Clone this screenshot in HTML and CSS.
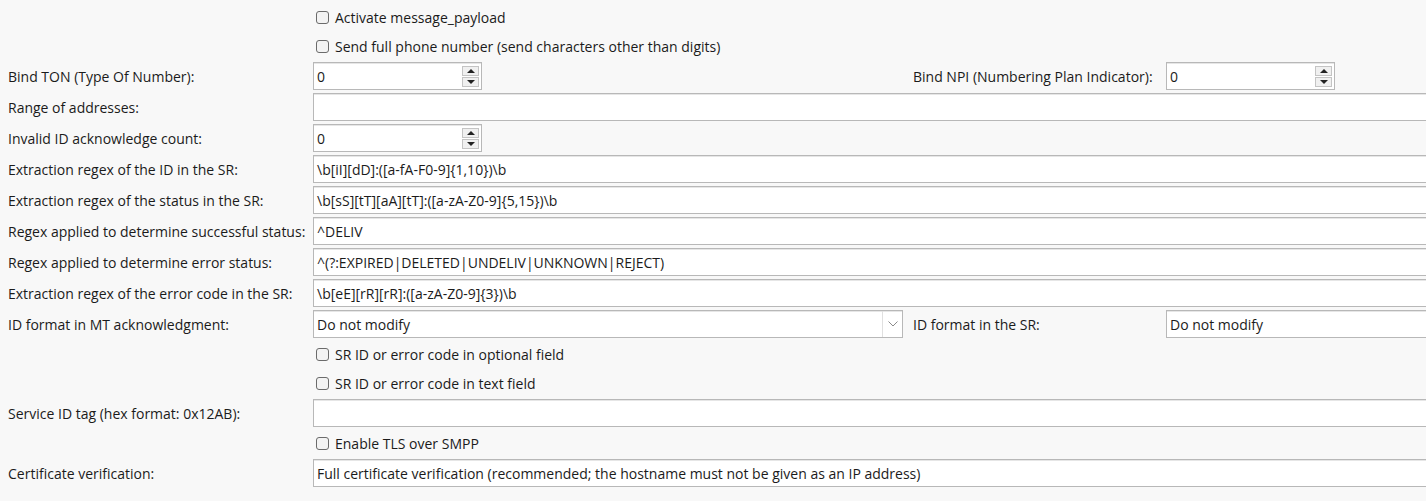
FILE: index.html
```html
<!DOCTYPE html>
<html>
<head>
<meta charset="utf-8">
<link rel="stylesheet" href="styles.css">
</head>
<body>
<div class="form">
  <div class="row cbrow"><span></span><label class="cb"><span class="box"></span>Activate message_payload</label></div>
  <div class="row cbrow"><span></span><label class="cb"><span class="box"></span>Send full phone number (send characters other than digits)</label></div>

  <div class="row">
    <span class="lbl">Bind TON (Type Of Number):</span>
    <div class="split">
      <div class="spin"><span class="val">0</span><span class="btns"><span class="up"></span><span class="dn"></span></span></div>
      <span class="lbl second">Bind NPI (Numbering Plan Indicator):</span>
      <div class="spin last"><span class="val">0</span><span class="btns"><span class="up"></span><span class="dn"></span></span></div>
    </div>
  </div>

  <div class="row"><span class="lbl">Range of addresses:</span><div class="text"></div></div>

  <div class="row">
    <span class="lbl">Invalid ID acknowledge count:</span>
    <div class="split">
      <div class="spin"><span class="val">0</span><span class="btns"><span class="up"></span><span class="dn"></span></span></div>
    </div>
  </div>

  <div class="row"><span class="lbl">Extraction regex of the ID in the SR:</span><div class="text">\b[iI][dD]:([a-fA-F0-9]{1,10})\b</div></div>
  <div class="row"><span class="lbl">Extraction regex of the status in the SR:</span><div class="text">\b[sS][tT][aA][tT]:([a-zA-Z0-9]{5,15})\b</div></div>
  <div class="row"><span class="lbl">Regex applied to determine successful status:</span><div class="text">^DELIV</div></div>
  <div class="row"><span class="lbl">Regex applied to determine error status:</span><div class="text">^(?:EXPIRED|DELETED|UNDELIV|UNKNOWN|REJECT)</div></div>
  <div class="row"><span class="lbl">Extraction regex of the error code in the SR:</span><div class="text">\b[eE][rR][rR]:([a-zA-Z0-9]{3})\b</div></div>

  <div class="row">
    <span class="lbl">ID format in MT acknowledgment:</span>
    <div class="split">
      <div class="combo first"><span class="val">Do not modify</span><span class="arrow"><svg width="10" height="6" viewBox="0 0 10 6"><path d="M0.5 0.5 L5 5 L9.5 0.5" fill="none" stroke="#8a8a8a" stroke-width="1"/></svg></span></div>
      <span class="lbl second">ID format in the SR:</span>
      <div class="combo last"><span class="val">Do not modify</span></div>
    </div>
  </div>

  <div class="row cbrow"><span></span><label class="cb"><span class="box"></span>SR ID or error code in optional field</label></div>
  <div class="row cbrow"><span></span><label class="cb"><span class="box"></span>SR ID or error code in text field</label></div>

  <div class="row"><span class="lbl">Service ID tag (hex format: 0x12AB):</span><div class="text"></div></div>

  <div class="row cbrow"><span></span><label class="cb"><span class="box"></span>Enable TLS over SMPP</label></div>

  <div class="row"><span class="lbl">Certificate verification:</span><div class="text">Full certificate verification (recommended; the hostname must not be given as an IP address)</div></div>
</div>
</body>
</html>
```

FILE: styles.css
```css
html, body {
  margin: 0;
  padding: 0;
  background: #f8f8f8;
  overflow: hidden;
}
body {
  font-family: "Open Sans", "Noto Sans", sans-serif;
  font-size: 14px;
  color: #1b1b1b;
}
.form {
  width: 1440px;
  padding: 4px 0 0 8px;
  display: flex;
  flex-direction: column;
  gap: 3px;
}
.row {
  display: grid;
  grid-template-columns: 305px 1fr;
  align-items: center;
  height: 28px;
}
.row.cbrow {
  height: 26px;
}
.lbl {
  white-space: nowrap;
}
.text, .spin, .combo {
  box-sizing: border-box;
  height: 28px;
  background: #fff;
  border: 1px solid #b8b8b8;
  box-shadow: inset 0 1px 0 #e6e6e6;
  display: flex;
  align-items: center;
  padding-left: 3px;
  white-space: nowrap;
}
.split {
  display: grid;
  grid-template-columns: 169px 431px 253px 1fr;
  align-items: center;
}
.split .second {
  grid-column: 3;
}
.split .last {
  grid-column: 4;
}
.split .combo.first {
  grid-column: 1 / span 2;
  width: 590px;
}
.spin {
  width: 169px;
  justify-content: space-between;
  padding-right: 2px;
}
.btns {
  display: flex;
  flex-direction: column;
  gap: 1px;
}
.btns span {
  box-sizing: border-box;
  width: 17px;
  height: 10px;
  border: 1px solid #c4c4c4;
  background: #f0f0f0;
  position: relative;
}
.btns .up::after, .btns .dn::after {
  content: "";
  position: absolute;
  left: 4px;
  top: 2px;
  border-left: 4px solid transparent;
  border-right: 4px solid transparent;
}
.btns .up::after {
  border-bottom: 4px solid #222;
}
.btns .dn::after {
  border-top: 4px solid #222;
}
.combo {
  justify-content: space-between;
}
.combo .arrow {
  width: 19px;
  height: 26px;
  border-left: 1px solid #e0e0e0;
  display: flex;
  align-items: center;
  justify-content: center;
}
.cb {
  display: flex;
  align-items: center;
  gap: 6px;
  white-space: nowrap;
  padding-left: 3px;
}
.cb .box {
  box-sizing: border-box;
  width: 13px;
  height: 13px;
  border: 1px solid #6b6b6b;
  border-radius: 3px;
  background: #f3f3f3;
}
```
